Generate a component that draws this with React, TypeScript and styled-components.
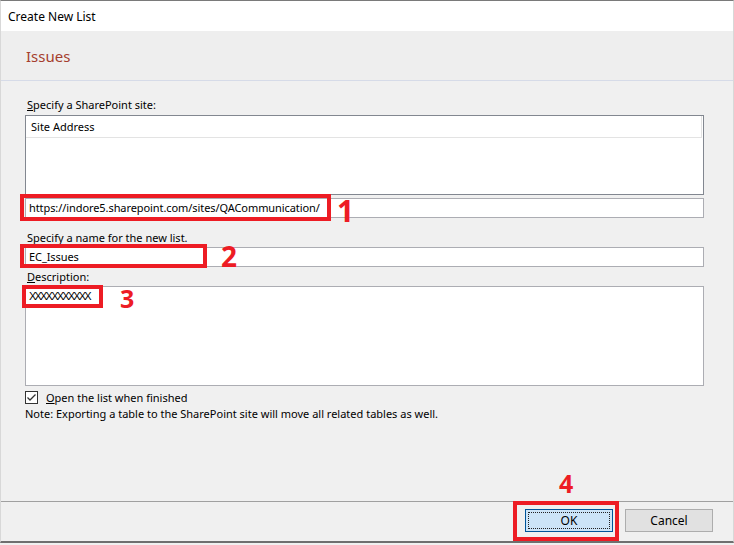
import React from 'react';
import styled, { createGlobalStyle } from 'styled-components';

const GlobalStyle = createGlobalStyle`
  html, body {
    margin: 0;
    padding: 0;
    background: #f0f0f0;
  }
  body {
    font-family: 'Noto Sans', 'Segoe UI', sans-serif;
    font-size: 11px;
    color: #000;
  }
`;

const Dialog = styled.div`
  width: 734px;
  height: 543px;
  box-sizing: border-box;
  display: flex;
  flex-direction: column;
  background: #f0f0f0;
  border-top: 1px solid #7a7a7a;
  border-left: 1px solid #d8d8d8;
  border-right: 1px solid #d8d8d8;
  border-bottom: 2px solid #6f6f6f;
`;

const TitleBar = styled.div`
  height: 30px;
  display: flex;
  align-items: center;
  padding-left: 7px;
  background: #fff;
  font-size: 12px;
`;

const Header = styled.div`
  height: 49px;
  display: flex;
  align-items: center;
  padding-left: 25px;
  background: #eeeeee;
  border-bottom: 1px solid #d6dbe8;
  color: #a53e2e;
  font-size: 15px;
`;

const Body = styled.div`
  flex: 1;
  display: flex;
  flex-direction: column;
  padding: 17px 29px 0 24px;
`;

const Label = styled.div<{ $gap?: number }>`
  height: 14px;
  line-height: 14px;
  margin-top: ${(p) => p.$gap ?? 0}px;
  padding-left: 2px;
  white-space: nowrap;
`;

const Field = styled.div<{ $gap?: number }>`
  position: relative;
  margin-top: ${(p) => p.$gap ?? 0}px;
`;

const SiteList = styled.div`
  height: 80px;
  box-sizing: border-box;
  border: 1px solid #828790;
  background: #fff;
`;

const ColumnHeader = styled.div`
  height: 21px;
  line-height: 21px;
  padding-left: 5px;
  border-bottom: 1px solid #e3e3e3;
  border-right: 1px solid #e3e3e3;
  margin-right: 1px;
`;

const TextBox = styled.div<{ $height?: number; $top?: boolean }>`
  height: ${(p) => p.$height ?? 20}px;
  box-sizing: border-box;
  border: 1px solid #acadb3;
  background: #fff;
  padding: ${(p) => (p.$top ? '2px 3px' : '0 3px 1px')};
  display: flex;
  align-items: ${(p) => (p.$top ? 'flex-start' : 'center')};
  white-space: nowrap;
  letter-spacing: -0.08px;
`;

const Xs = styled.span`
  font-family: 'Liberation Sans', Arial, sans-serif;
  font-size: 11px;
  letter-spacing: -1.8px;
  line-height: 14px;
`;

const CheckRow = styled.label`
  display: flex;
  align-items: center;
  gap: 8px;
  height: 14px;
  margin-top: 4px;
`;

const Note = styled.div`
  height: 14px;
  line-height: 14px;
  margin-top: 3px;
  white-space: nowrap;
`;

const Footer = styled.div`
  display: flex;
  justify-content: flex-end;
  gap: 12px;
  padding: 7px 20px 9px;
  border-top: 1px solid #a0a0a0;
`;

const ButtonWrap = styled.div`
  position: relative;
`;

const Button = styled.button<{ $primary?: boolean }>`
  position: relative;
  width: 88px;
  height: 23px;
  box-sizing: border-box;
  font-family: inherit;
  font-size: 12px;
  color: #000;
  background: ${(p) => (p.$primary ? '#cce4f7' : '#e1e1e1')};
  border: 1px solid ${(p) => (p.$primary ? '#005499' : '#adadad')};
  padding: 0;

  ${(p) =>
    p.$primary &&
    `
    &::after {
      content: '';
      position: absolute;
      inset: 2px;
      border: 1px dotted #222;
    }
  `}
`;

const RedBox = styled.div<{ $l: number; $t: number; $w: number; $h: number }>`
  position: absolute;
  left: ${(p) => p.$l}px;
  top: ${(p) => p.$t}px;
  width: ${(p) => p.$w}px;
  height: ${(p) => p.$h}px;
  box-sizing: border-box;
  border: 4px solid #ed1c24;
  pointer-events: none;
`;

const Marker = styled.div<{ $l: number; $t: number; $size: number }>`
  position: absolute;
  left: ${(p) => p.$l}px;
  top: ${(p) => p.$t}px;
  font-family: 'Noto Sans', sans-serif;
  font-weight: 700;
  font-size: ${(p) => p.$size}px;
  line-height: 1;
  color: #ed1c24;
`;

function CheckBox() {
  return (
    <svg width="13" height="13" viewBox="0 0 13 13">
      <rect x="0.5" y="0.5" width="12" height="12" fill="#fff" stroke="#333" />
      <path d="M2.5 6.5 L5 9 L10.5 3.5" fill="none" stroke="#333" strokeWidth="1.3" />
    </svg>
  );
}

export default function App() {
  return (
    <>
      <GlobalStyle />
      <Dialog>
        <TitleBar>Create New List</TitleBar>
        <Header>Issues</Header>
        <Body>
          <Label>
            <u>S</u>pecify a SharePoint site:
          </Label>
          <Field $gap={3}>
            <SiteList>
              <ColumnHeader>Site Address</ColumnHeader>
            </SiteList>
          </Field>
          <Field $gap={3}>
            <TextBox>https://indore5.sharepoint.com/sites/QACommunication/</TextBox>
            <RedBox $l={-5} $t={-4} $w={311} $h={27} />
            <Marker $l={312} $t={-2} $size={30}>
              1
            </Marker>
          </Field>
          <Label $gap={13}>Specify a name for the new list.</Label>
          <Field $gap={2}>
            <TextBox>EC_Issues</TextBox>
            <RedBox $l={-5} $t={-3} $w={187} $h={24} />
            <Marker $l={196} $t={-5} $size={28}>
              2
            </Marker>
          </Field>
          <Label $gap={3}>
            <u>D</u>escription:
          </Label>
          <Field $gap={2}>
            <TextBox $height={100} $top>
              <Xs>XXXXXXXXXXX</Xs>
            </TextBox>
            <RedBox $l={-3} $t={-1} $w={81} $h={23} />
            <Marker $l={95} $t={0} $size={25}>
              3
            </Marker>
          </Field>
          <CheckRow>
            <CheckBox />
            <span>
              <u>O</u>pen the list when finished
            </span>
          </CheckRow>
          <Note>Note: Exporting a table to the SharePoint site will move all related tables as well.</Note>
        </Body>
        <Footer>
          <ButtonWrap>
            <Button $primary>OK</Button>
            <RedBox $l={-12} $t={-8} $w={106} $h={40} />
            <Marker $l={34} $t={-38} $size={25}>
              4
            </Marker>
          </ButtonWrap>
          <ButtonWrap>
            <Button>Cancel</Button>
          </ButtonWrap>
        </Footer>
      </Dialog>
    </>
  );
}
